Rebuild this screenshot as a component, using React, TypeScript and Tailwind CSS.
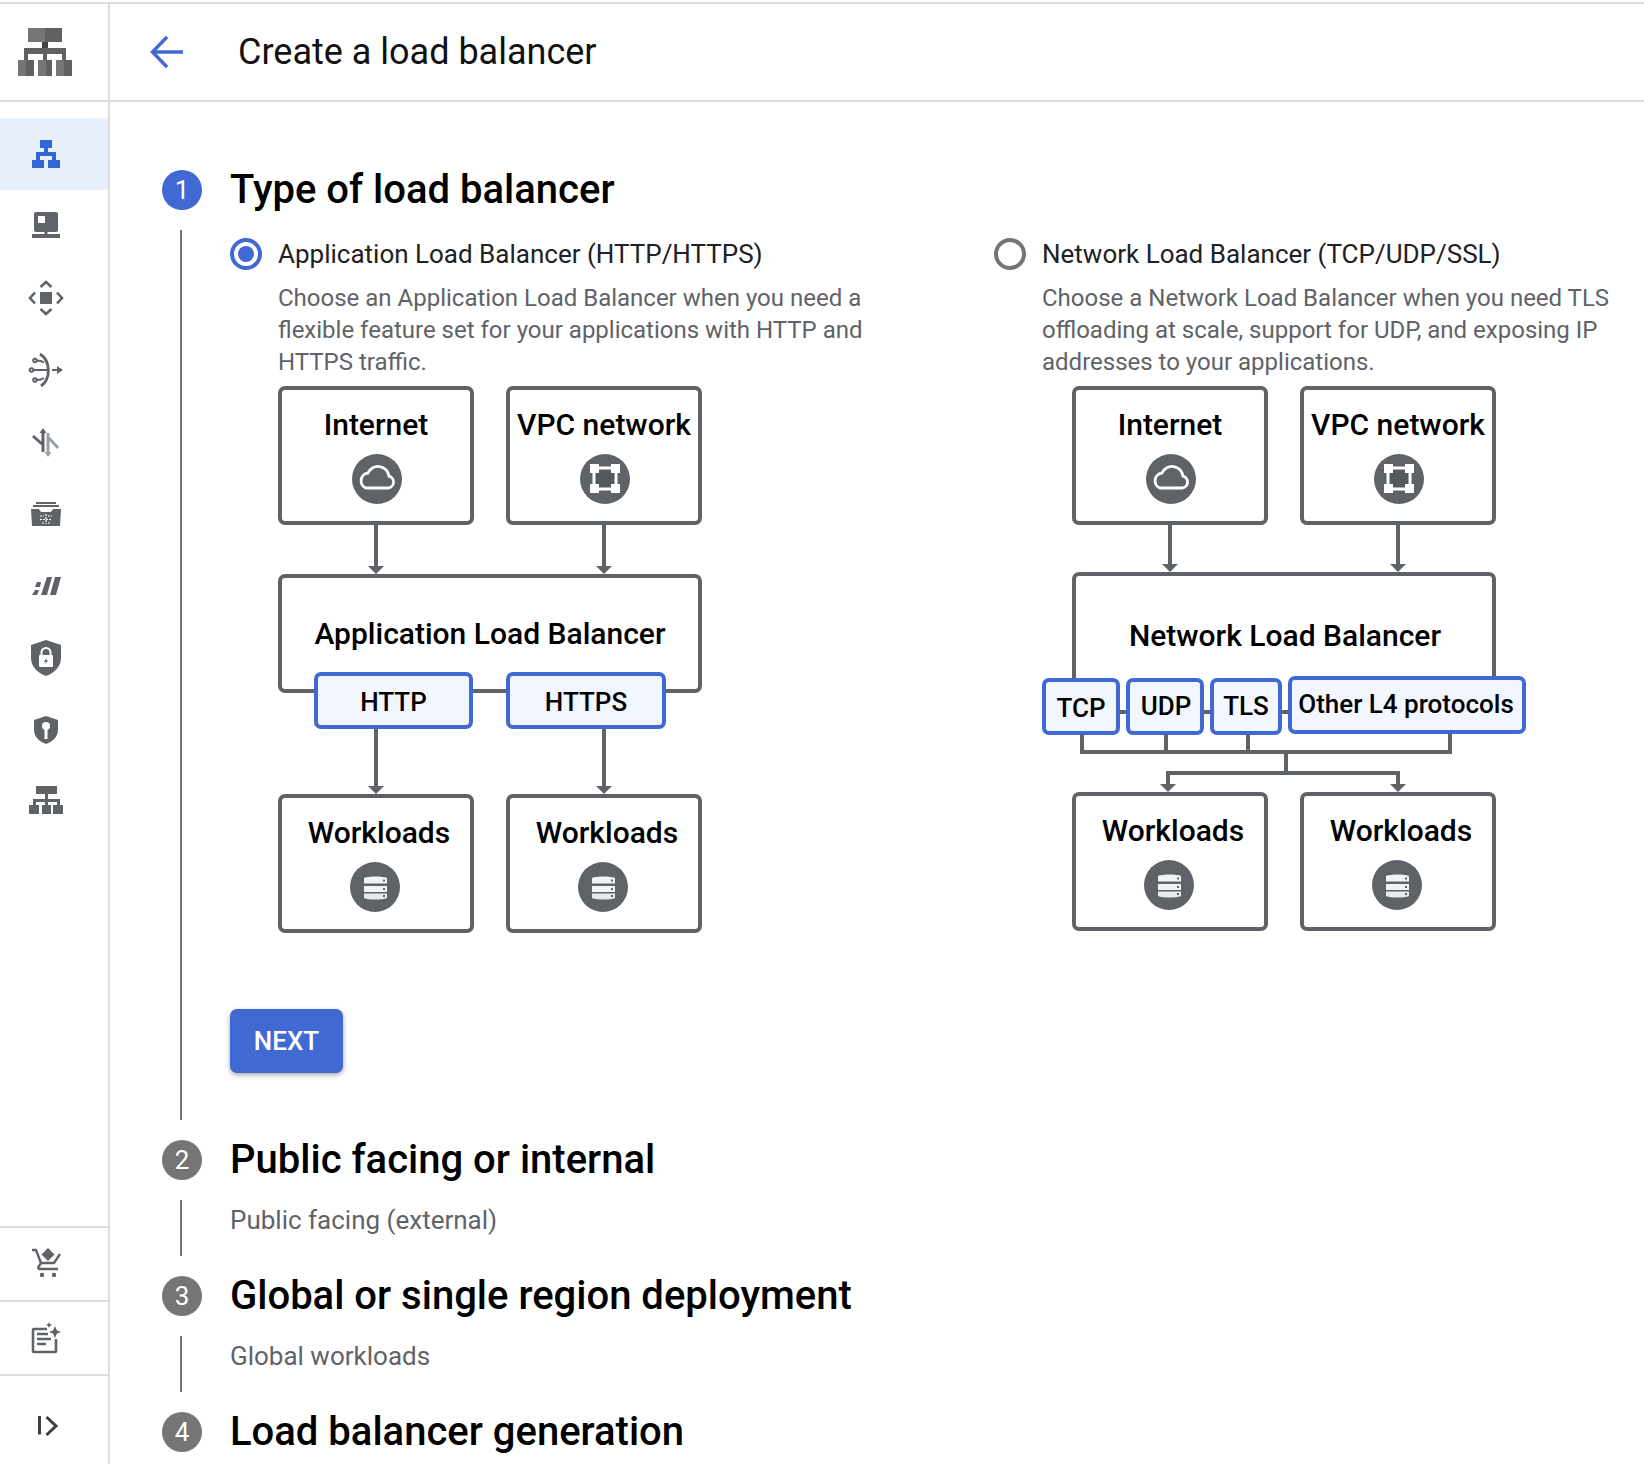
import React from 'react';

const Logo = () => (
  <svg width="54" height="48" viewBox="0 0 54 48">
    <rect x="10" y="0" width="17" height="14" fill="#757575" />
    <rect x="27" y="0" width="17" height="14" fill="#616161" />
    <rect x="24" y="14" width="6" height="6" fill="#424242" />
    <path d="M6 32V20h42v12h-4v-6H29v6h-4v-6H10v6z" fill="#616161" />
    <rect x="0" y="32" width="8" height="16" fill="#757575" />
    <rect x="8" y="32" width="8" height="16" fill="#616161" />
    <rect x="20" y="32" width="8" height="16" fill="#757575" />
    <rect x="28" y="32" width="6" height="16" fill="#616161" />
    <rect x="38" y="32" width="8" height="16" fill="#757575" />
    <rect x="46" y="32" width="8" height="16" fill="#616161" />
  </svg>
);

const BalancerIcon = () => (
  <svg width="36" height="36" viewBox="0 0 36 36" fill="#3367d6">
    <rect x="12" y="4" width="12" height="8" />
    <rect x="16" y="12" width="4" height="4" />
    <path d="M8 24v-8h20v8h-4v-4H12v4z" />
    <rect x="4" y="24" width="12" height="8" />
    <rect x="20" y="24" width="12" height="8" />
  </svg>
);

const MonitorIcon = () => (
  <svg width="36" height="36" viewBox="0 0 36 36" fill="#5f6368">
    <path fillRule="evenodd" d="M8 4h20a2 2 0 0 1 2 2v16a2 2 0 0 1-2 2H8a2 2 0 0 1-2-2V6a2 2 0 0 1 2-2zm2 4v7h7V8z" />
    <rect x="16.500" y="24" width="3" height="3" />
    <rect x="4" y="26" width="28" height="4" />
  </svg>
);

const MoveIcon = () => (
  <svg width="36" height="36" viewBox="0 0 36 36" fill="none" stroke="#5f6368" strokeWidth="2.600">
    <rect x="12" y="12" width="12" height="12" fill="#5f6368" stroke="none" />
    <path d="M12.500 7 18 2l5.500 5M12.500 29l5.500 5 5.500-5M7 12.500 2 18l5 5.500M29 12.500l5 5.500-5 5.500" />
  </svg>
);

const ArcIcon = () => (
  <svg width="36" height="36" viewBox="0 0 36 36" fill="none" stroke="#5f6368" strokeWidth="2">
    <path d="M12 2c11 7 11 25 1 32" strokeWidth="2.800" />
    <path d="M6 18h14M24 18h6" />
    <path d="M29 14l6 4-6 4z" fill="#5f6368" stroke="none" />
    <circle cx="3.500" cy="18" r="1.800" />
    <circle cx="7" cy="8.500" r="1.800" />
    <circle cx="7" cy="28" r="1.800" />
    <path d="M9 8.500c3 0 5 .5 7 2M9 28c3 0 5-.5 7-2" />
  </svg>
);

const SplitIcon = () => (
  <svg width="36" height="36" viewBox="0 0 36 36" fill="none" strokeWidth="3">
    <path d="M15 8v20M5 12l9 8" stroke="#5f6368" />
    <path d="M11.500 9 15 4l3.500 5z" fill="#5f6368" />
    <path d="M20 9v22M21 14l9 10" stroke="#9aa0a6" />
    <path d="M16.500 28l3.500 5 3.500-5z" fill="#9aa0a6" />
  </svg>
);

const DrawerIcon = () => (
  <svg width="36" height="36" viewBox="0 0 36 36" fill="#5f6368">
    <rect x="8" y="6" width="20" height="2" />
    <rect x="5" y="9" width="26" height="2" />
    <path d="M3 13h8l2 3h10l2-3h8l-1 17H4z" />
    <path d="M12 20h4M20 20h4M12 23.500h12M14 27h3M20 27h3M18 18v10" stroke="#fff" strokeWidth="1.200" strokeDasharray="2 1" />
  </svg>
);

const SlashesIcon = () => (
  <svg width="36" height="36" viewBox="0 0 36 36" fill="#5f6368">
    <polygon points="19,9 24,9 19,27 13,27" />
    <polygon points="27,9 33,9 28,27 22,27" />
    <polygon points="9,14 13,14 12,19 7,19" />
    <polygon points="7,22 11,22 9,27 4,27" />
  </svg>
);

const ShieldLockIcon = () => (
  <svg width="36" height="36" viewBox="0 0 36 36">
    <path d="M18 0 33 5v13c0 9-7 15-15 18C10 33 3 27 3 18V5z" fill="#5f6368" />
    <path d="M13.500 16v-3.500a4.500 4.500 0 0 1 9 0V16" fill="none" stroke="#fff" strokeWidth="2" />
    <rect x="11" y="15" width="14" height="12" rx="1" fill="#fff" />
    <path d="M19 17l-3 5h2l-1 3 3-5h-2z" fill="#5f6368" />
  </svg>
);

const ShieldKeyIcon = () => (
  <svg width="36" height="36" viewBox="0 0 36 36">
    <path d="M18 4l12 4v10c0 7-6 12-12 14-6-2-12-7-12-14V8z" fill="#5f6368" />
    <circle cx="18" cy="14" r="4" fill="#fff" />
    <rect x="16.500" y="16" width="3" height="11" fill="#fff" />
  </svg>
);

const HierarchyIcon = () => (
  <svg width="36" height="36" viewBox="0 0 36 36" fill="#5f6368">
    <rect x="8" y="2" width="21" height="8" />
    <rect x="17" y="10" width="3" height="5" />
    <path d="M5 21v-6h27v6h-3v-3H20v3h-3v-3H8v3z" />
    <rect x="1" y="21" width="10" height="9" />
    <rect x="14" y="21" width="9" height="9" />
    <rect x="25" y="21" width="10" height="9" />
  </svg>
);

const CartIcon = () => (
  <svg width="36" height="36" viewBox="0 0 36 36" fill="none" stroke="#5f6368" strokeWidth="2.400">
    <path d="M20 2l6.500 6.500L20 15l-6.500-6.500z" fill="#5f6368" stroke="none" />
    <path d="M4 4h4l5 13h13l6-9" />
    <path d="M13 17l-2.500 4c-.6 1 .2 2 1 2H30" />
    <circle cx="14" cy="29" r="2.200" fill="#5f6368" stroke="none" />
    <circle cx="26" cy="29" r="2.200" fill="#5f6368" stroke="none" />
  </svg>
);

const NoteIcon = () => (
  <svg width="36" height="36" viewBox="0 0 36 36" fill="none" stroke="#5f6368" strokeWidth="2.600">
    <path d="M19 9H6a1 1 0 0 0-1 1v21a1 1 0 0 0 1 1h21a1 1 0 0 0 1-1V19" />
    <path d="M9 14h11M9 19h14M9 24h9" />
    <path d="M27 6l1.800 4.200L33 12l-4.200 1.800L27 18l-1.800-4.200L21 12l4.200-1.800z" fill="#5f6368" stroke="none" />
    <path d="M21 2l.9 2.100L24 5l-2.100.9L21 8l-.9-2.100L18 5l2.100-.9z" fill="#5f6368" stroke="none" />
  </svg>
);

const CollapseIcon = () => (
  <svg width="36" height="36" viewBox="0 0 36 36" fill="none" stroke="#3c4043" strokeWidth="3">
    <path d="M11.500 8v18.500M18.500 9l9.500 9-9.500 9" />
  </svg>
);

const CloudGlyph = () => (
  <path d="M14 34h22a6 6 0 0 0 1-11.800A11 11 0 0 0 16 19a7.800 7.800 0 0 0-2 15z" fill="none" stroke="#fff" strokeWidth="2.800" />
);

const VpcGlyph = () => (
  <>
    <rect x="14" y="14" width="22" height="21" fill="#55585c" stroke="#fff" strokeWidth="3" />
    <rect x="10" y="10" width="9" height="9" fill="#fff" />
    <rect x="31" y="10" width="9" height="9" fill="#fff" />
    <rect x="10" y="30" width="9" height="9" fill="#fff" />
    <rect x="31" y="30" width="9" height="9" fill="#fff" />
  </>
);

const DbGlyph = () => (
  <>
    <path d="M14 16c4-2 19-2 23 0v5.500H14z" fill="#f1f3f4" />
    <path d="M14 24h23v6H14z" fill="#f1f3f4" />
    <path d="M14 31.500h23V36c-4 2-19 2-23 0z" fill="#e8eaed" />
    <rect x="33" y="17.500" width="2" height="2" fill="#5f6368" />
    <rect x="33" y="26" width="2" height="2" fill="#5f6368" />
    <rect x="33" y="33" width="2" height="2" fill="#5f6368" />
  </>
);

const Badge = ({ children, className }: { children: React.ReactNode; className: string }) => (
  <svg width="50" height="50" viewBox="0 0 50 50" className={`mt-[9px] ${className}`}>
    <circle cx="25" cy="25" r="25" fill="#5f6368" />
    {children}
  </svg>
);

const Arrow = ({ className }: { className: string }) => (
  <div className={`absolute flex w-[16px] flex-col items-center ${className}`}>
    <div className="w-[4px] flex-1 bg-[#5f6368]" />
    <svg width="16" height="8" viewBox="0 0 16 8" className="-mt-[1px] shrink-0">
      <path d="M0 0h16L8 8z" fill="#5f6368" />
    </svg>
  </div>
);

const Node = ({ label, className, textClass, children }: { label: string; className: string; textClass?: string; children?: React.ReactNode }) => (
  <div className={`absolute flex h-[139px] w-[196px] flex-col rounded-[7px] border-4 border-[#5f6368] bg-white pt-[15px] ${className}`}>
    <div className={`whitespace-nowrap text-center text-[30px] leading-[40px] font-medium text-black ${textClass ?? ''}`}>{label}</div>
    {children}
  </div>
);

const Chip = ({ label, className, textClass }: { label: string; className: string; textClass?: string }) => (
  <div className={`absolute flex items-center justify-center whitespace-nowrap rounded-[7px] border-4 border-[#4169d3] bg-[#f2f6fe] text-[26px] leading-none font-medium text-black ${className}`}>
    <span className={textClass}>{label}</span>
  </div>
);

const AppDiagram = () => (
  <div className="relative mt-2 h-[547px] w-[430px]">
    <Node label="Internet" className="left-0 top-0">
      <Badge className="ml-[70px]"><CloudGlyph /></Badge>
    </Node>
    <Node label="VPC network" className="left-[228px] top-0">
      <Badge className="ml-[70px]"><VpcGlyph /></Badge>
    </Node>
    <Arrow className="left-[90px] top-[139px] h-[49px]" />
    <Arrow className="left-[318px] top-[139px] h-[49px]" />
    <div className="absolute left-0 top-[188px] h-[119px] w-[424px] rounded-[7px] border-4 border-[#5f6368] bg-white">
      <div className="pt-[36px] text-center text-[30px] leading-[40px] font-medium whitespace-nowrap text-black">Application Load Balancer</div>
    </div>
    <Chip label="HTTP" className="left-[36px] top-[286px] h-[57px] w-[159px]" textClass="mt-[3px]" />
    <Chip label="HTTPS" className="left-[228px] top-[286px] h-[57px] w-[160px]" textClass="mt-[3px]" />
    <Arrow className="left-[90px] top-[343px] h-[65px]" />
    <Arrow className="left-[318px] top-[343px] h-[65px]" />
    <Node label="Workloads" className="left-0 top-[408px]" textClass="pl-[6px]">
      <Badge className="ml-[68px]"><DbGlyph /></Badge>
    </Node>
    <Node label="Workloads" className="left-[228px] top-[408px]" textClass="pl-[6px]">
      <Badge className="ml-[68px]"><DbGlyph /></Badge>
    </Node>
  </div>
);

const NetworkDiagram = () => (
  <div className="relative mt-2 h-[547px] w-[490px]">
    <Node label="Internet" className="left-[30px] top-0">
      <Badge className="ml-[70px]"><CloudGlyph /></Badge>
    </Node>
    <Node label="VPC network" className="left-[258px] top-0">
      <Badge className="ml-[70px]"><VpcGlyph /></Badge>
    </Node>
    <Arrow className="left-[120px] top-[139px] h-[47px]" />
    <Arrow className="left-[348px] top-[139px] h-[47px]" />
    <div className="absolute left-[30px] top-[186px] h-[142px] w-[424px] rounded-[7px] border-4 border-[#5f6368] bg-white">
      <div className="pt-[40px] pl-[2px] text-center text-[30px] leading-[40px] font-medium whitespace-nowrap text-black">Network Load Balancer</div>
    </div>
    <Chip label="TCP" className="left-0 top-[292px] h-[57px] w-[78px]" textClass="mt-[2px]" />
    <Chip label="UDP" className="left-[84px] top-[292px] h-[57px] w-[78px]" textClass="-mt-[2px] pl-[2px]" />
    <Chip label="TLS" className="left-[168px] top-[292px] h-[57px] w-[72px]" textClass="-mt-[2px]" />
    <Chip label="Other L4 protocols" className="left-[246px] top-[290px] h-[58px] w-[238px]" textClass="-mt-[3px] pr-[2px]" />
    <div className="absolute left-[38px] top-[349px] h-[17px] w-[4px] bg-[#5f6368]" />
    <div className="absolute left-[122px] top-[349px] h-[17px] w-[4px] bg-[#5f6368]" />
    <div className="absolute left-[204px] top-[349px] h-[17px] w-[4px] bg-[#5f6368]" />
    <div className="absolute left-[406px] top-[348px] h-[18px] w-[4px] bg-[#5f6368]" />
    <div className="absolute left-[38px] top-[364px] h-[4px] w-[372px] bg-[#5f6368]" />
    <div className="absolute left-[242px] top-[368px] h-[17px] w-[4px] bg-[#5f6368]" />
    <div className="absolute left-[124px] top-[385px] h-[4px] w-[234px] bg-[#5f6368]" />
    <Arrow className="left-[118px] top-[385px] h-[21px]" />
    <Arrow className="left-[348px] top-[385px] h-[21px]" />
    <Node label="Workloads" className="left-[30px] top-[406px]" textClass="pl-[6px]">
      <Badge className="ml-[68px]"><DbGlyph /></Badge>
    </Node>
    <Node label="Workloads" className="left-[258px] top-[406px]" textClass="pl-[6px]">
      <Badge className="ml-[68px]"><DbGlyph /></Badge>
    </Node>
  </div>
);

const railIcons = [MonitorIcon, MoveIcon, ArcIcon, SplitIcon, DrawerIcon, SlashesIcon, ShieldLockIcon, ShieldKeyIcon, HierarchyIcon];

const StepHead = ({ n, title, active }: { n: number; title: string; active?: boolean }) => (
  <div className="flex h-[40px] items-center gap-[28px]">
    <div className={`flex h-[40px] w-[40px] items-center justify-center rounded-full text-[26px] text-white ${active ? 'bg-[#4169d3]' : 'bg-[#757575]'}`}>{n}</div>
    <h2 className="text-[40px] leading-[48px] font-medium whitespace-nowrap text-black">{title}</h2>
  </div>
);

const StepSummary = ({ text }: { text: string }) => (
  <div className="my-[20px] ml-[18px] flex h-[56px] items-center border-l-2 border-[#757575] pb-[16px] pl-[48px] text-[26px] text-[#5f6368]">{text}</div>
);

export default function App() {
  return (
    <div className="flex h-[1464px] w-[1644px] flex-col overflow-hidden bg-white pt-[2px] font-['Roboto',sans-serif]">
      <div className="flex h-full flex-col border-t-2 border-[#dadce0]">
        <div className="flex min-h-0 flex-1">
          {/* left rail */}
          <aside className="flex w-[110px] shrink-0 flex-col border-r-2 border-[#dadce0]">
            <div className="flex h-[98px] shrink-0 items-center border-b-2 border-[#dadce0] pl-[18px]">
              <Logo />
            </div>
            <nav className="mt-4 flex flex-col">
              <div className="flex h-[72px] items-center bg-[#e8f0fe] pl-[28px]">
                <BalancerIcon />
              </div>
              {railIcons.map((Icon, i) => (
                <div key={i} className="flex h-[72px] items-center pl-[28px]">
                  <Icon />
                </div>
              ))}
            </nav>
            <div className="mt-auto flex flex-col">
              <div className="flex h-[74px] items-center border-t-2 border-[#dadce0] pl-[28px]"><CartIcon /></div>
              <div className="flex h-[74px] items-center border-t-2 border-[#dadce0] pl-[28px]"><NoteIcon /></div>
              <div className="h-[90px] border-t-2 border-[#dadce0] pl-[28px] pt-[32px]"><CollapseIcon /></div>
            </div>
          </aside>

          <main className="min-w-0 flex-1">
            <header className="flex h-[98px] items-center border-b-2 border-[#dadce0] pl-[40px]">
              <svg width="34" height="34" viewBox="0 0 34 34" fill="none" stroke="#4169d3" strokeWidth="3.400">
                <path d="M33 17H4M17 2 2.500 17 17 32" />
              </svg>
              <h1 className="ml-[54px] text-[36px] leading-none whitespace-nowrap text-[#111]">Create a load balancer</h1>
            </header>

            <div className="pl-[52px] pt-[68px]">
              <StepHead n={1} title="Type of load balancer" active />
              <div className="mt-[20px] ml-[18px] h-[890px] border-l-2 border-[#757575] pl-[48px] pt-2">
                <div className="flex">
                  <div className="w-[764px] shrink-0">
                    <div className="flex h-[32px] items-center gap-4">
                      <div className="flex h-[32px] w-[32px] items-center justify-center rounded-full border-4 border-[#4169d3]">
                        <div className="h-[16px] w-[16px] rounded-full bg-[#4169d3]" />
                      </div>
                      <span className="text-[26px] whitespace-nowrap text-[#202124]">Application Load Balancer (HTTP/HTTPS)</span>
                    </div>
                    <div className="ml-[48px]">
                      <p className="mt-3 text-[24px] leading-[32px] whitespace-nowrap text-[#5f6368]">
                        Choose an Application Load Balancer when you need a<br />
                        flexible feature set for your applications with HTTP and<br />
                        HTTPS traffic.
                      </p>
                      <AppDiagram />
                    </div>
                  </div>
                  <div className="min-w-0 flex-1">
                    <div className="flex h-[32px] items-center gap-4">
                      <div className="h-[32px] w-[32px] rounded-full border-4 border-[#757575]" />
                      <span className="text-[26px] whitespace-nowrap text-[#202124]">Network Load Balancer (TCP/UDP/SSL)</span>
                    </div>
                    <div className="ml-[48px]">
                      <p className="mt-3 text-[24px] leading-[32px] whitespace-nowrap text-[#5f6368]">
                        Choose a Network Load Balancer when you need TLS<br />
                        offloading at scale, support for UDP, and exposing IP<br />
                        addresses to your applications.
                      </p>
                      <NetworkDiagram />
                    </div>
                  </div>
                </div>
                <button className="mt-[76px] flex h-[64px] w-[113px] items-center justify-center rounded-[7px] bg-[#4169d3] text-[26px] font-medium text-white shadow-[0_2px_5px_rgba(0,0,0,0.35)]">
                  NEXT
                </button>
              </div>
              <div className="h-[20px]" />
              <StepHead n={2} title="Public facing or internal" />
              <StepSummary text="Public facing (external)" />
              <StepHead n={3} title="Global or single region deployment" />
              <StepSummary text="Global workloads" />
              <StepHead n={4} title="Load balancer generation" />
            </div>
          </main>
        </div>
      </div>
    </div>
  );
}
